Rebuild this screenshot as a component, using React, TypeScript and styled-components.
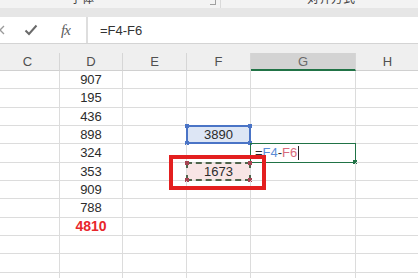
import styled, { createGlobalStyle, css } from "styled-components";

const GlobalStyle = createGlobalStyle`
  html, body {
    margin: 0;
    padding: 0;
    background: #ffffff;
    overflow: hidden;
  }
  body {
    width: 418px;
    height: 278px;
    font-family: "Liberation Sans", Arial, sans-serif;
  }
`;

const Page = styled.div`
  width: 418px;
  height: 278px;
  overflow: hidden;
  display: flex;
  flex-direction: column;

  & > * {
    flex-shrink: 0;
  }
`;

const Ribbon = styled.div`
  height: 8px;
  background: #f3f3f3;
  display: flex;
  align-items: flex-end;
  overflow: hidden;
`;

const Group = styled.div<{ $width: number }>`
  width: ${({ $width }) => $width}px;
  height: 100%;
  flex: none;
  position: relative;
  display: flex;
  align-items: flex-end;
  justify-content: center;
  border-right: 1px solid #dadada;
`;

const GroupLabel = styled.span<{ $shift: number }>`
  font-family: "Noto Sans CJK SC", sans-serif;
  font-size: 12px;
  line-height: 12px;
  color: #444;
  margin-bottom: 4px;
  margin-right: ${({ $shift }) => $shift}px;
`;

const Launcher = styled.span`
  position: absolute;
  right: 4px;
  bottom: 3px;
  width: 5px;
  height: 5px;
  border-right: 1px solid #a0a0a0;
  border-bottom: 1px solid #a0a0a0;
`;

const Band = styled.div`
  height: 9px;
  background: #e6e6e6;
`;

const FormulaBar = styled.div`
  height: 26px;
  background: #ffffff;
  border-bottom: 1px solid #d4d4d4;
  display: flex;
  align-items: stretch;
`;

const NameTools = styled.div`
  width: 86px;
  flex: none;
  position: relative;
`;

const ToolIcon = styled.span<{ $left: number }>`
  position: absolute;
  left: ${({ $left }) => $left}px;
  top: 50%;
  transform: translateY(-50%);
  display: flex;
  align-items: center;
`;

const Fx = styled.span`
  font-family: "Liberation Serif", "Times New Roman", serif;
  font-style: italic;
  font-size: 15px;
  color: #5c5c5c;
  letter-spacing: -1px;
`;

const Divider = styled.div`
  width: 2px;
  background: #dedede;
  flex: none;
`;

const FormulaInput = styled.div`
  flex: 1;
  display: flex;
  align-items: center;
  padding-left: 12px;
  font-size: 13px;
  color: #333;
`;

const Gap = styled.div`
  height: 9px;
  background: #efefef;
`;

const SheetArea = styled.div`
  position: relative;
  margin-left: -4px;
`;

const Grid = styled.div`
  display: grid;
  grid-template-columns: 64px 63px 64px 64px 105px 64px;
  grid-template-rows: 18px;
  grid-auto-rows: 18.33px;
`;

const HeaderCell = styled.div<{ $active?: boolean }>`
  box-sizing: border-box;
  background: ${({ $active }) => ($active ? "#d3d3d3" : "#efefef")};
  border-right: 1px solid #d6d6d6;
  border-bottom: ${({ $active }) =>
    $active ? "2px solid #217346" : "1px solid #d0d0d0"};
  display: flex;
  align-items: center;
  justify-content: center;
  font-size: 13px;
  color: ${({ $active }) => ($active ? "#6a6a6a" : "#505050")};
`;

type Mode = "selected" | "copied" | "editing" | undefined;

const Cell = styled.div<{ $mode?: Mode; $total?: boolean }>`
  box-sizing: border-box;
  position: relative;
  border-right: 1px solid #dcdcdc;
  border-bottom: 1px solid #dcdcdc;
  display: flex;
  align-items: center;
  justify-content: center;
  font-size: 13px;
  color: #2b2b2b;
  white-space: nowrap;
  ${({ $mode }) =>
    $mode === "selected" &&
    css`
      background: #dde6f5;
    `}
  ${({ $mode }) =>
    $mode === "copied" &&
    css`
      background: #f8e5e5;
    `}
  ${({ $mode }) =>
    $mode === "editing" &&
    css`
      justify-content: flex-start;
      padding-left: 4px;
    `}
  ${({ $total }) =>
    $total &&
    css`
      color: #e8262b;
      font-weight: bold;
      font-size: 14px;
    `}
`;

const Frame = styled.div<{ $mode: Mode }>`
  position: absolute;
  left: -1px;
  top: -1px;
  right: -1px;
  bottom: -1px;
  box-sizing: border-box;
  pointer-events: none;
  ${({ $mode }) =>
    $mode === "selected" &&
    css`
      border: 2px solid #4a74c6;
    `}
  ${({ $mode }) =>
    $mode === "copied" &&
    css`
      border: 2px dashed #4f654c;
    `}
  ${({ $mode }) =>
    $mode === "editing" &&
    css`
      border: 1.5px solid #217346;
    `}
`;

const Handle = styled.span<{ $color: string; $x: "l" | "r"; $y: "t" | "b" }>`
  position: absolute;
  width: 4px;
  height: 4px;
  background: ${({ $color }) => $color};
  ${({ $x }) => ($x === "l" ? "left: -2px;" : "right: -2px;")}
  ${({ $y }) => ($y === "t" ? "top: -2px;" : "bottom: -2px;")}
`;

const RefBlue = styled.span`
  color: #5b8dd6;
`;

const RefRed = styled.span`
  color: #d86a7c;
`;

const Caret = styled.span`
  display: inline-block;
  width: 1px;
  height: 14px;
  background: #222;
  margin-left: 1px;
`;

const Highlight = styled.div`
  position: absolute;
  left: 173px;
  top: 102px;
  width: 97px;
  height: 35px;
  box-sizing: border-box;
  border: 4px solid #e31f1f;
  pointer-events: none;
`;

const columns = ["C", "D", "E", "F", "G", "H"];

const dValues = ["907", "195", "436", "898", "324", "353", "909", "788", "4810"];

const Check = () => (
  <svg width="14" height="12" viewBox="0 0 14 12">
    <path
      d="M1.5 6.5 L5 10 L12.5 1.5"
      fill="none"
      stroke="#6a6a6a"
      strokeWidth="2"
    />
  </svg>
);

const Cross = () => (
  <svg width="10" height="10" viewBox="0 0 10 10">
    <path d="M1 1 L9 9 M9 1 L1 9" stroke="#9a9a9a" strokeWidth="1.3" />
  </svg>
);

const Handles = ({ color, all }: { color: string; all: boolean }) => (
  <>
    {all && <Handle $color={color} $x="l" $y="t" />}
    {all && <Handle $color={color} $x="r" $y="t" />}
    {all && <Handle $color={color} $x="l" $y="b" />}
    <Handle $color={color} $x="r" $y="b" />
  </>
);

const renderCell = (col: string, row: number) => {
  const key = `${col}${row}`;
  if (col === "D" && row <= dValues.length) {
    return (
      <Cell key={key} $total={row === 9}>
        {dValues[row - 1]}
      </Cell>
    );
  }
  if (key === "F4") {
    return (
      <Cell key={key} $mode="selected">
        3890
        <Frame $mode="selected" />
        <Handles color="#4a74c6" all />
      </Cell>
    );
  }
  if (key === "F6") {
    return (
      <Cell key={key} $mode="copied">
        1673
        <Frame $mode="copied" />
        <Handles color="#a64452" all />
      </Cell>
    );
  }
  if (key === "G5") {
    return (
      <Cell key={key} $mode="editing">
        =<RefBlue>F4</RefBlue>-<RefRed>F6</RefRed>
        <Caret />
        <Frame $mode="editing" />
        <Handles color="#217346" all={false} />
      </Cell>
    );
  }
  return <Cell key={key} />;
};

export default function App() {
  const rows = Array.from({ length: 12 }, (_, i) => i + 1);
  return (
    <>
      <GlobalStyle />
      <Page>
        <Ribbon>
          <Group $width={220}>
            <GroupLabel $shift={56}>字体</GroupLabel>
            <Launcher />
          </Group>
          <Group $width={220}>
            <GroupLabel $shift={0}>对齐方式</GroupLabel>
          </Group>
        </Ribbon>
        <Band />
        <FormulaBar>
          <NameTools>
            <ToolIcon $left={-5}>
              <Cross />
            </ToolIcon>
            <ToolIcon $left={24}>
              <Check />
            </ToolIcon>
            <ToolIcon $left={61}>
              <Fx>fx</Fx>
            </ToolIcon>
          </NameTools>
          <Divider />
          <FormulaInput>=F4-F6</FormulaInput>
        </FormulaBar>
        <Gap />
        <SheetArea>
          <Grid>
            {columns.map((c) => (
              <HeaderCell key={c} $active={c === "G"}>
                {c}
              </HeaderCell>
            ))}
            {rows.map((r) => columns.map((c) => renderCell(c, r)))}
          </Grid>
          <Highlight />
        </SheetArea>
      </Page>
    </>
  );
}
